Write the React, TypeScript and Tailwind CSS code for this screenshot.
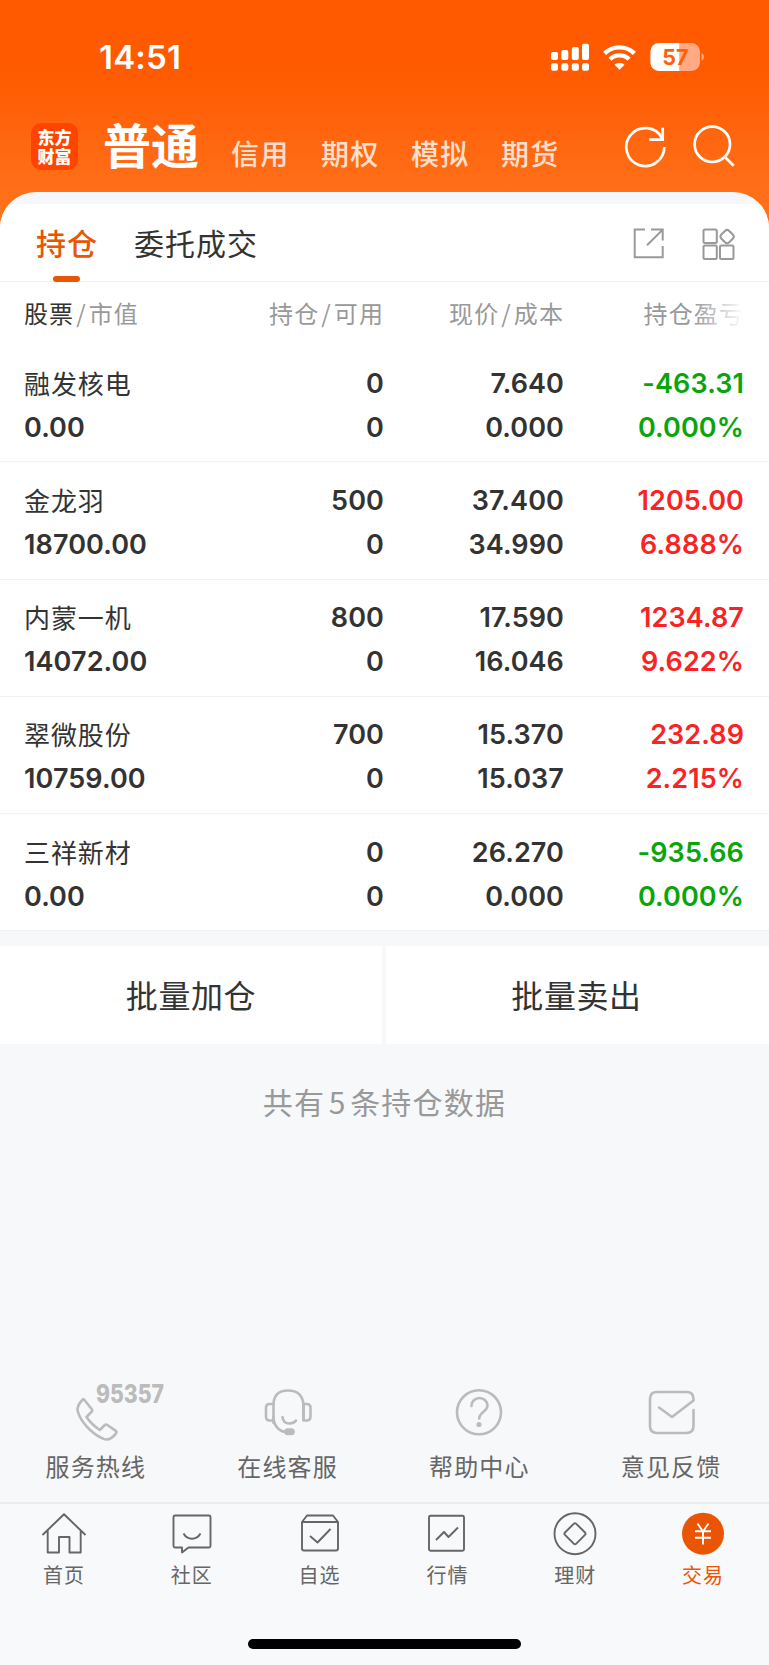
import { ReactNode } from 'react';

type Holding = {
  name: string;
  value: string;
  amount: string;
  available: string;
  price: string;
  cost: string;
  profit: string;
  rate: string;
  up: boolean;
};

const holdings: Holding[] = [
  { name: '融发核电', value: '0.00', amount: '0', available: '0', price: '7.640', cost: '0.000', profit: '-463.31', rate: '0.000%', up: false },
  { name: '金龙羽', value: '18700.00', amount: '500', available: '0', price: '37.400', cost: '34.990', profit: '1205.00', rate: '6.888%', up: true },
  { name: '内蒙一机', value: '14072.00', amount: '800', available: '0', price: '17.590', cost: '16.046', profit: '1234.87', rate: '9.622%', up: true },
  { name: '翠微股份', value: '10759.00', amount: '700', available: '0', price: '15.370', cost: '15.037', profit: '232.89', rate: '2.215%', up: true },
  { name: '三祥新材', value: '0.00', amount: '0', available: '0', price: '26.270', cost: '0.000', profit: '-935.66', rate: '0.000%', up: false },
];

const accounts = ['信用', '期权', '模拟', '期货'];

function StatusBar() {
  return (
    <div className="flex h-[112px] items-center justify-between pl-[99px] pr-[65px] pt-[2px]">
      <span className="font-['Inter'] text-[33px] font-semibold leading-none tracking-[0.2px]">14:51</span>
      <div className="flex items-center">
        <svg width="38" height="28" viewBox="0 0 38 28" fill="white" className="mr-[14px]">
          <rect x="0" y="9" width="7" height="8" rx="2" />
          <rect x="10.3" y="7" width="7" height="10" rx="2" />
          <rect x="20.8" y="4" width="7" height="13" rx="2" />
          <rect x="31" y="0.7" width="7" height="16.3" rx="2" />
          <rect x="0" y="20.3" width="7" height="7.5" rx="2" />
          <rect x="10.3" y="20.3" width="7" height="7.5" rx="2" />
          <rect x="20.8" y="20.3" width="7" height="7.5" rx="2" />
          <rect x="31" y="20.3" width="7" height="7.5" rx="2" />
        </svg>
        <svg width="33" height="25" viewBox="0 0 33 25" fill="none" stroke="white" className="mr-[14px]">
          <path d="M1.6 8.4a21.4 21.4 0 0 1 29.8 0" strokeWidth="4.4" />
          <path d="M7 14.2a13.6 13.6 0 0 1 19 0" strokeWidth="4.4" />
          <path d="M16.5 24.7l-5-4.9a7 7 0 0 1 10 0z" fill="white" stroke="none" />
        </svg>
        <svg width="54" height="28" viewBox="0 0 54 28" className="overflow-visible">
          <defs>
            <clipPath id="battery">
              <rect x="0.5" y="0" width="49.4" height="28" rx="8.5" />
            </clipPath>
          </defs>
          <g clipPath="url(#battery)">
            <rect width="50" height="28" fill="#ffaa82" />
            <rect width="29.2" height="28" fill="white" />
          </g>
          <path d="M51.5 10.3c3.4 1 3.4 6.4 0 7.4z" fill="#ffaa82" />
          <text x="25.4" y="21.9" textAnchor="middle" fontFamily="Inter" fontWeight="700" fontSize="21.5" fill="#ff5f0a">
            57
          </text>
        </svg>
      </div>
    </div>
  );
}

function AccountBar() {
  return (
    <div className="flex h-[80px] items-start pl-[31px] pr-[34px]">
      <div className="mt-[11px] w-[47px] whitespace-pre-line rounded-[10px] bg-[#ff4400] pb-[5px] pt-[4px] text-center text-[17px] font-black leading-[19px]">
        {'东方\n财富'}
      </div>
      <h1 className="ml-[25px] w-[98px] whitespace-nowrap text-[48px] font-bold leading-[62px]">普通</h1>
      <div className="ml-[30px] flex gap-[31px] pt-[20.5px]">
        {accounts.map((a) => (
          <span key={a} className="w-[59px] whitespace-nowrap text-[28px] font-medium leading-[40px] tracking-[1.3px] text-[#ffe0cf]">
            {a}
          </span>
        ))}
      </div>
      <svg width="42" height="42" viewBox="0 0 42 42" fill="none" stroke="white" strokeWidth="2.7" className="ml-auto mt-[14px]">
        <path d="M40.3 21A19 19 0 1 1 38 12" />
        <path d="M38.7 1.7v12H25.3" />
      </svg>
      <svg width="42" height="42" viewBox="0 0 42 42" fill="none" stroke="white" strokeWidth="2.7" className="ml-[27px] mt-[13px]">
        <circle cx="19.3" cy="19.3" r="17.7" />
        <path d="M31.7 31.7l9 9" />
      </svg>
    </div>
  );
}

function PanelTabs() {
  return (
    <div className="mt-3 flex h-[78px] items-start border-b border-[#f1f2f4] bg-white pl-9 text-[30px] leading-[44px] tracking-[1px]">
      <div className="flex h-[78px] flex-col items-center justify-between pt-[15.5px] text-[#ea5504]">
        <span className="font-medium">持仓</span>
        <span className="mr-[2px] h-[6px] w-[27px] rounded-[3px] bg-[#ea5504]" />
      </div>
      <span className="ml-9 pt-[15.5px] text-[#333333]">委托成交</span>
      <svg width="31" height="31" viewBox="0 0 31 31" fill="none" stroke="#999999" strokeWidth="2" className="ml-auto mt-[23.5px]">
        <path d="M12 1.6H1.7V29.3H29.7V18" />
        <path d="M18 1.6H29.7V12.5M29.7 1.6L14 17.3" />
      </svg>
      <svg width="33" height="32" viewBox="0 0 33 32" fill="none" stroke="#999999" strokeWidth="2" className="ml-[38px] mr-[34px] mt-[23.5px]">
        <rect x="1.5" y="1.6" width="13.3" height="13.3" rx="1.5" />
        <rect x="1.5" y="17.6" width="13.3" height="13.3" rx="1.5" />
        <rect x="18" y="17.6" width="13.5" height="13.3" rx="1.5" />
        <rect x="19.6" y="3.1" width="11" height="11" rx="3" transform="rotate(45 25.1 8.6)" />
      </svg>
    </div>
  );
}

const columns = 'grid grid-cols-[204px_156px_180px_180px] pl-6';

function TableHead() {
  return (
    <div className={`${columns} h-[63px] items-center bg-white pb-[1px] text-[24px] tracking-[1.1px] text-[#999999]`}>
      <div className="whitespace-nowrap">
        <span className="text-[#333333]">股票</span>
        <span className="mx-[2px]">/</span>市值
      </div>
      <div className="whitespace-nowrap text-right">
        持仓<span className="mx-[2px]">/</span>可用
      </div>
      <div className="whitespace-nowrap text-right">
        现价<span className="mx-[2px]">/</span>成本
      </div>
      <div className="relative whitespace-nowrap text-right">
        持仓盈亏
        <span className="absolute inset-y-0 right-0 w-[50px] bg-gradient-to-r from-white/0 to-white" />
      </div>
    </div>
  );
}

function Cell({ top, bottom, color }: { top: string; bottom: string; color: string }) {
  return (
    <div className={`flex flex-col text-right font-['Inter'] text-[27px] font-semibold leading-[44px] tracking-[0.1px] ${color}`}>
      <span>{top}</span>
      <span>{bottom}</span>
    </div>
  );
}

function HoldingRow({ item }: { item: Holding }) {
  const color = item.up ? 'text-[#fa2323]' : 'text-[#0aa50a]';
  return (
    <div className={`${columns} h-[117.3px] border-b border-[#f1f2f4] bg-white pt-[16.5px] text-[#333333]`}>
      <div className="flex flex-col whitespace-nowrap">
        <span className="mb-[2px] text-[26px] leading-[42px] tracking-[0.9px]">{item.name}</span>
        <span className="font-['Inter'] text-[27px] font-semibold leading-[44px] tracking-[0.1px]">{item.value}</span>
      </div>
      <Cell top={item.amount} bottom={item.available} color="" />
      <Cell top={item.price} bottom={item.cost} color="" />
      <Cell top={item.profit} bottom={item.rate} color={color} />
    </div>
  );
}

function Service({ label, children }: { label: string; children: ReactNode }) {
  return (
    <div className="flex flex-1 flex-col items-center">
      <svg width="140" height="60" viewBox="0 0 140 60" fill="none" stroke="#bbbbbb" strokeWidth="2.6" strokeLinecap="round" strokeLinejoin="round" className="overflow-visible">
        {children}
      </svg>
      <span className="mt-[7px] text-[24px] leading-[36px] tracking-[1.2px] text-[#666666]">{label}</span>
    </div>
  );
}

function Services() {
  return (
    <div className="flex pr-[2px] pt-[2.5px]">
      <Service label="服务热线">
        <path d="M58 18.5l8 10q.8 1-.2 2l-5.3 5.5q5 7.5 13.3 13l5-5q1-.9 2.2-.2l8.5 5.8q1.7 1.2.5 2.8c-3 4-7.5 7.5-12.5 5.5C64.5 52 54.500 40 51.800 30.500c-1.300-4.500 2-9 5-12q.7-.7 1.200 0z" />
        <text x="70" y="21.5" textLength="68" lengthAdjust="spacingAndGlyphs" fontFamily="Inter" fontWeight="800" fontSize="25.5" fill="#bbbbbb" stroke="none">
          95357
        </text>
      </Service>
      <Service label="在线客服">
        <path d="M55.5 42V24Q55.5 9.5 70 9.5T85.500 24V38.500" />
        <path d="M54.500 23h-3q-3.500 0-3.500 3.500v9q0 4 3.500 4h4M85.500 23h3q4 0 4 3.500v9q0 4-4 4h-3z" />
        <path d="M55.500 36c0 8 5 14.500 13 15" />
        <path d="M64.500 36q.5 6.500 7 6.500 4.500 0 6.500-3" />
        <rect x="67.500" y="48.500" width="8" height="4.500" rx="2.250" fill="#bbbbbb" />
      </Service>
      <Service label="帮助中心">
        <circle cx="70" cy="31.300" r="22" />
        <path d="M62.500 25v-.5a8 7.500 0 0 1 16 0c0 6-8.300 6.500-8.300 13" />
        <circle cx="70" cy="43.500" r="1.300" fill="#bbbbbb" />
      </Service>
      <Service label="意见反馈">
        <path d="M92.500 29V45q0 7-7 7H56q-7 0-7-7V18q0-7 7-7H85.500q7 0 7 7v1.500L71 36 58 26.500" />
      </Service>
    </div>
  );
}

function Tab({ label, active, children }: { label: string; active?: boolean; children: ReactNode }) {
  return (
    <div className={`flex flex-1 flex-col items-center ${active ? 'text-[#ea5504]' : 'text-[#666666]'}`}>
      <svg width="46" height="46" viewBox="0 0 46 46" fill="none" stroke="currentColor" strokeWidth="1.9" strokeLinejoin="round">
        {children}
      </svg>
      <span className="mt-[2.5px] text-[20px] leading-[30px] tracking-[1px]">{label}</span>
    </div>
  );
}

function TabBar() {
  return (
    <div className="flex h-[163px] border-t-2 border-[#ebecee] bg-[#f8f9fb] pr-[2px] pt-[7px]">
      <Tab label="首页">
        <path d="M1.5 24L23 3.2 44.5 24M6.7 19.5V41.5H18V26H28.5V41.5H39.7V19.5" />
      </Tab>
      <Tab label="社区">
        <path d="M6 4.5H40q1.5 0 1.5 1.5V35q0 1.5-1.5 1.5H19.5L13 41.5V36.5H6Q4.5 36.5 4.5 35V6Q4.5 4.5 6 4.5z" />
        <path d="M14.5 22.5c4 7 13 7 17 0" />
      </Tab>
      <Tab label="自选">
        <path d="M5 11L10 4.5H36L41 11V37.5Q41 39.5 39 39.5H7Q5 39.5 5 37.5zM5 11H41" />
        <path d="M13 25l7.5 6.5 13-13.5" />
      </Tab>
      <Tab label="行情">
        <rect x="5" y="4.7" width="35" height="35" rx="1.5" />
        <path d="M12 29l8-8 4.5 5 9.5-9.5" />
      </Tab>
      <Tab label="理财">
        <circle cx="23" cy="22.7" r="20.5" />
        <path d="M21.7 12.8q1.3-1.3 2.6 0l8.700 8.700q1.200 1.200 0 2.400l-8.700 8.700q-1.300 1.300-2.600 0l-8.700-8.700q-1.200-1.200 0-2.400z" />
      </Tab>
      <Tab label="交易" active>
        <circle cx="23" cy="22.7" r="21" fill="currentColor" stroke="none" />
        <path d="M17.5 12.5l5.5 8 5.500-8M23 20.500v13M15 20.300h16M15 26.800h16" stroke="white" />
      </Tab>
    </div>
  );
}

export default function App() {
  return (
    <div className="flex h-[1665px] w-[769px] flex-col overflow-hidden bg-[#f7f8fa] font-['Noto_Sans_CJK_SC',sans-serif]">
      <div className="bg-gradient-to-b from-[#ff5a00] from-[70px] to-[#ff721a] to-[210px] text-white">
        <StatusBar />
        <AccountBar />
        <div className="h-[90px] overflow-hidden rounded-t-[36px] bg-[#f6f7fa]">
          <PanelTabs />
        </div>
      </div>

      <TableHead />
      {holdings.map((item) => (
        <HoldingRow key={item.name} item={item} />
      ))}

      <div className="mt-[14.5px] grid h-[98px] grid-cols-[382px_383px] gap-1 text-[32px] tracking-[0.6px] text-[#333333]">
        <button className="bg-white pb-[2px]">批量加仓</button>
        <button className="bg-white pb-[2px] pr-[2px]">批量卖出</button>
      </div>

      <p className="mt-[33px] text-center text-[30px] leading-[48px] tracking-[1.2px] text-[#999999]">
        共有<span className="mx-[3.5px]">5</span>条持仓数据
      </p>

      <div className="mb-[18.5px] mt-auto">
        <Services />
      </div>
      <div className="relative">
        <TabBar />
        <span className="absolute bottom-4 left-[248px] h-[10px] w-[273px] rounded-full bg-black" />
      </div>
    </div>
  );
}
